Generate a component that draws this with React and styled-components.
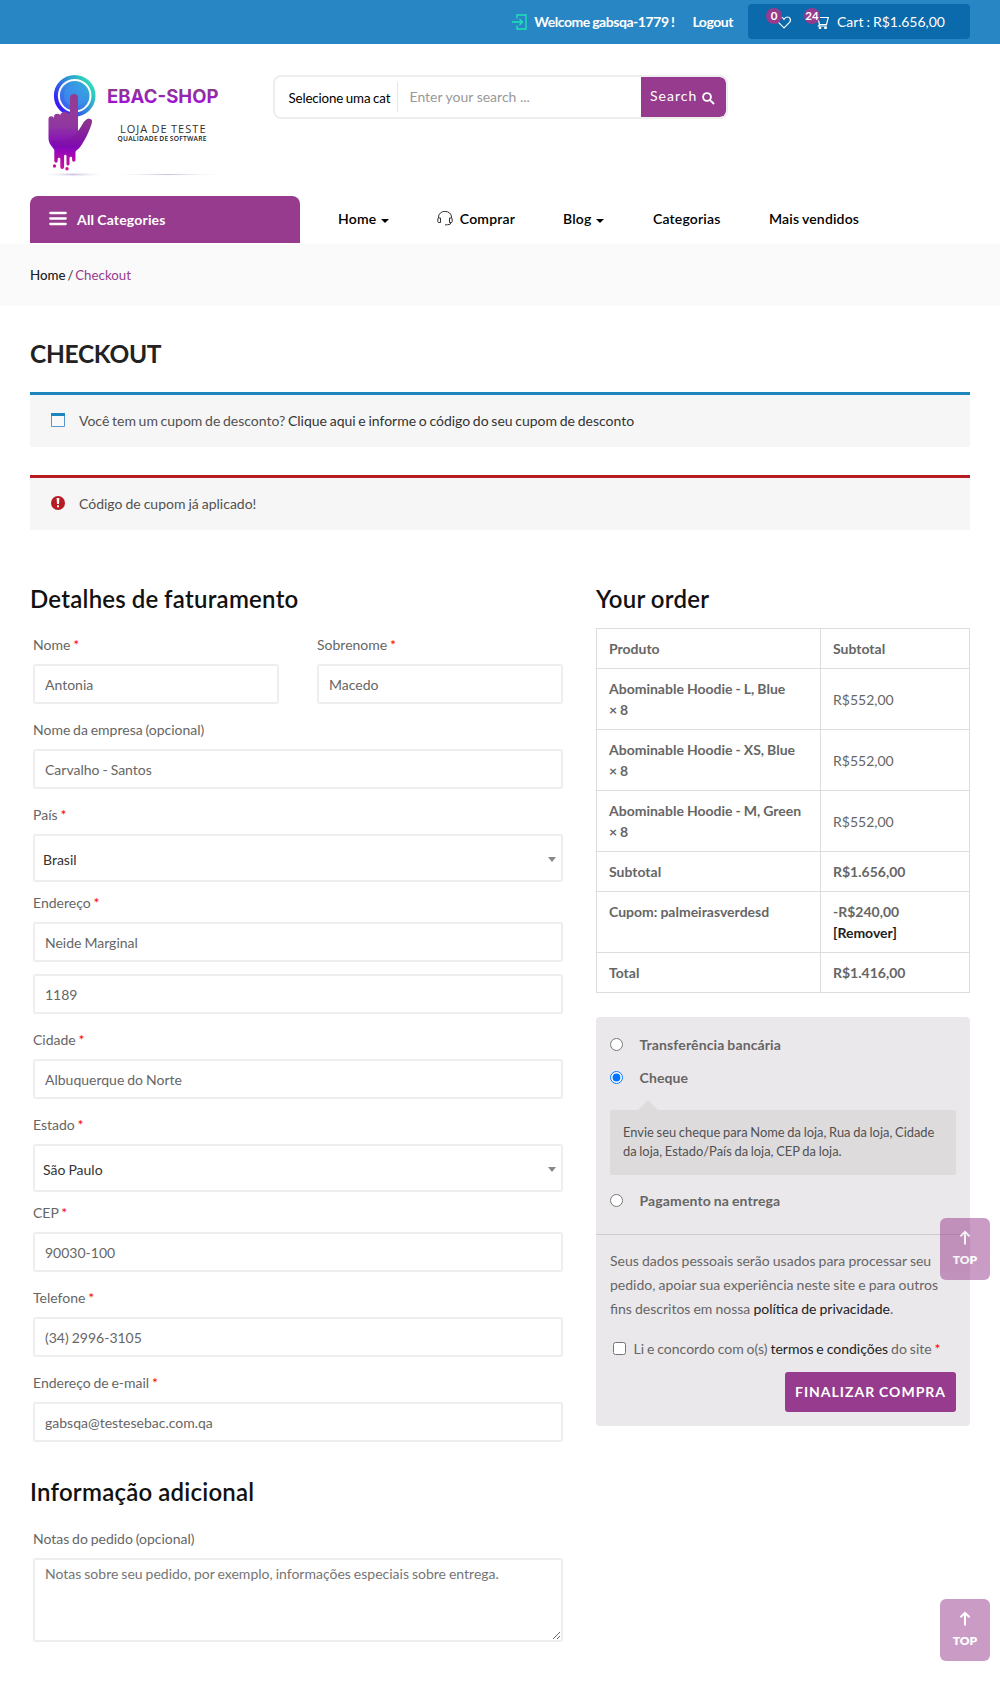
import React from "react";
import styled, { createGlobalStyle, css } from "styled-components";

const PURPLE = "#963b8d";

const Global = createGlobalStyle`
  * { box-sizing: border-box; }
  body {
    margin: 0; background: #fff; color: #666;
    font-family: Lato, "Liberation Sans", sans-serif;
    font-size: 14px; line-height: 21px; word-spacing: -0.6px;
  }
  a { color: inherit; text-decoration: none; }
  input, textarea, button { font-family: inherit; word-spacing: inherit; }
`;

const Page = styled.div`
  position: relative; width: 1000px; height: 1701px; overflow: hidden;
`;
const Container = styled.div` padding: 0 30px; `;

/* top bar */
const TopBar = styled.div`
  display: flex; justify-content: flex-end; align-items: flex-start;
  height: 44px; padding: 4px 30px 0 0; background: #2986c4; color: #fff;
`;
const TopLink = styled.a`
  display: flex; align-items: center; height: 35px;
  margin-right: ${(p) => p.$gap}px;
  font-size: 14px; font-weight: 700; letter-spacing: -0.45px; white-space: nowrap;
  svg { margin-right: 7px; }
`;
const CartBox = styled.div`
  display: flex; align-items: center; width: 222px; height: 35px;
  padding-left: 29px; border-radius: 4px; background: #0a6aac;
`;
const IconSlot = styled.span`
  position: relative; display: flex; width: ${(p) => p.$w}px; height: 14px; margin-right: ${(p) => p.$gap}px;
`;
const Badge = styled.span`
  position: absolute; left: ${(p) => p.$left}px; top: -7px;
  width: 16px; height: 16px; border-radius: 50%; background: ${PURPLE};
  font-size: 11.5px; line-height: 15px; font-weight: 700; text-align: center;
  display: flex; justify-content: center;
`;
const CartText = styled.span` font-size: 14px; white-space: nowrap; `;

/* header */
const Header = styled.div` display: flex; height: 152px; padding-left: 30px; `;
const Logo = styled.svg` display: block; width: 243px; height: 152px; `;
const SearchBar = styled.div`
  display: flex; align-items: stretch; width: 455px; height: 44px; margin-top: 31px;
  border: 2px solid #eee; border-radius: 8px; overflow: hidden;
`;
const SearchCat = styled.div`
  width: 123px; margin: 5px 0; padding-left: 13.5px; border-right: 1px solid #e5e5e5;
  color: #000; font-size: 13.333px; line-height: 33px; letter-spacing: -0.15px; white-space: nowrap;
`;
const SearchField = styled.div`
  flex: 1; padding-left: 11.5px; color: #999; font-size: 14px; line-height: 40px; word-spacing: 0;
`;
const SearchButton = styled.div`
  display: flex; align-items: center; width: 85px; padding: 0 0 3px 9px; border-radius: 0 6px 6px 0;
  background: ${PURPLE}; color: #fff; font-size: 14px; letter-spacing: 1px;
  svg { margin: 5px 0 0 5px; }
`;

/* navigation */
const Nav = styled.nav` display: flex; height: 48px; padding-left: 30px; `;
const AllCategories = styled.div`
  display: flex; align-items: center; width: 270px; height: 47px; padding-left: 19px;
  border-radius: 8px 8px 0 0; background: ${PURPLE}; color: #fff; font-weight: 700; letter-spacing: 0.18px;
  svg { margin-right: 10px; margin-top: -2px; }
`;
const NavItem = styled.a`
  display: flex; align-items: center; height: 45px; margin-left: ${(p) => p.$left}px;
  color: #000; font-size: 14px; font-weight: 600; letter-spacing: 0.18px; white-space: nowrap;
  svg { margin-right: 7px; }
`;
const Caret = styled.i`
  margin: 4px 0 0 5px; border: 4px solid transparent; border-top-color: #000; border-bottom: 0;
`;

const Breadcrumb = styled.div`
  height: 62px; padding: 21px 30px 0; background: #fafafa; color: #333; font-size: 13.3px; word-spacing: -1.6px;
  a { color: #222; font-weight: 500; }
  span { color: ${PURPLE}; }
`;

const PageTitle = styled.h1`
  margin: 0; padding-top: 33px; height: 86px; color: #222;
  font-size: 24.5px; line-height: 30px; font-weight: 700; letter-spacing: -0.3px;
`;

const Notice = styled.div`
  display: flex; align-items: center; height: 55px; margin-bottom: 28px; padding: 0 0 2px 21px;
  border-top: 3px solid ${(p) => p.$color}; background: #f6f6f6; color: #515151;
  word-spacing: ${(p) => p.$ws}px;
  a { color: #333; }
  svg { margin-right: 14px; }
`;

const Columns = styled.div` display: flex; padding-top: 23px; `;
const Billing = styled.form` width: 533px; margin-right: 33px; `;
const Order = styled.div` width: 374px; `;
const Heading = styled.h3`
  margin: ${(p) => p.$mt || 0}px 0 ${(p) => p.$mb}px; color: #111;
  font-size: 24px; line-height: 36px; font-weight: 600; letter-spacing: 0.25px;
`;

const Fields = styled.div` padding-left: 3px; `;
const Row = styled.div` display: flex; gap: 38px; `;
const Field = styled.label` display: block; flex: 1; `;
const Label = styled.span`
  display: block; height: 33px; line-height: 28px; color: #666; word-spacing: -0.8px;
  i { color: red; font-style: normal; }
`;
const boxed = css`
  display: block; width: 100%; border: 2px solid #eee; border-radius: 3px; background: #fff;
  color: #666; font-size: 14px;
`;
const Input = styled.input` ${boxed} height: 40px; padding: 1px 10px 0; margin-bottom: 12px; outline: 0; `;
const Select = styled.div`
  ${boxed} display: flex; align-items: center; justify-content: space-between;
  height: 48px; padding: 2px 5px 0 8px; margin-bottom: 7px; color: #333;
`;
const SelectArrow = styled.i`
  border: 4px solid transparent; border-top: 5px solid #888; border-bottom: 0;
`;
const Notes = styled.textarea`
  ${boxed} height: 84px; padding: 3px 10px; line-height: 21px; outline: 0;
  &::placeholder { color: #757575; }
`;

/* order table */
const Table = styled.div`
  display: grid; grid-template-columns: 224px 149px; width: 374px;
  border: 1px solid #ddd; border-bottom: 0; word-spacing: -0.4px;
`;
const Cell = styled.div`
  display: flex; flex-direction: column; justify-content: ${(p) => (p.$middle ? "center" : "flex-start")};
  min-height: ${(p) => (p.$tall ? 61 : 40)}px; padding: 9px 12px;
  border-bottom: 1px solid #ddd; color: #666; font-weight: ${(p) => (p.$light ? 400 : 700)};
  &:nth-child(odd) { border-right: 1px solid #ddd; }
  a { color: #222; }
`;

/* payment */
const Payment = styled.div`
  margin-top: 24px; height: 409px; border-radius: 4px; background: #ebe8eb;
`;
const Methods = styled.div`
  display: flex; flex-direction: column; height: 218px; padding: 16px 14px 0;
  border-bottom: 1px solid #cfcbd1;
`;
const Method = styled.label`
  display: flex; align-items: center; height: 23px; margin-bottom: 10px; color: #666;
  font-weight: 700; letter-spacing: 0.12px;
  input { width: 13px; height: 13px; margin: 0 16.5px 0 0; }
`;
const MethodNote = styled.div`
  position: relative; height: 65px; margin: 11px 0 14px; padding: 13px; border-radius: 2px;
  background: #dedbdd; color: #515151; font-size: 12.9px; line-height: 19px; white-space: nowrap;
  &::before {
    content: ""; position: absolute; left: 28px; top: -10px;
    border: 10px solid transparent; border-top: 0; border-bottom-color: #dedbdd;
  }
`;
const Terms = styled.div`
  padding: 14px 14px 0; word-spacing: -0.5px;
  p { margin: 0; line-height: 24px; white-space: nowrap; }
  a { color: #222; }
`;
const Agree = styled.label`
  display: flex; align-items: center; height: 24px; margin: 15px 0 12px; white-space: pre; word-spacing: -0.65px;
  input { width: 13px; height: 13px; margin: 1px 7.5px 0 3px; }
  i { color: red; font-style: normal; }
`;
const PlaceOrder = styled.button`
  display: block; width: 171px; height: 40px; margin-left: auto; padding: 0 0 1px; border: 0; border-radius: 3px;
  background: ${PURPLE}; color: #fff; font-size: 14px; font-weight: 700; letter-spacing: 1px; white-space: nowrap;
`;

const TopButton = styled.a`
  position: absolute; left: 940px; top: ${(p) => p.$top}px; width: 50px; height: 62px;
  display: flex; flex-direction: column; align-items: center; padding-top: 12px;
  border-radius: 6px; background: ${PURPLE}; opacity: 0.5;
  color: #fff; font-size: 12px; line-height: 16px; font-weight: 800;
  svg { margin-bottom: 7px; }
`;

const LogoArt = () => (
  <Logo viewBox="30 44 243 152">
    <defs>
      <linearGradient id="ring" x1="0" y1="0.9" x2="1" y2="0.2">
        <stop offset="0" stopColor="#3a00ff" /><stop offset="0.5" stopColor="#2f7fe0" /><stop offset="1" stopColor="#2fe3b4" />
      </linearGradient>
      <linearGradient id="disc" x1="0" y1="1" x2="1" y2="0">
        <stop offset="0" stopColor="#3c55f5" /><stop offset="1" stopColor="#33b9d2" />
      </linearGradient>
      <linearGradient id="hand" x1="0" y1="0" x2="0" y2="1">
        <stop offset="0" stopColor="#943b8e" /><stop offset="0.42" stopColor="#9138a0" />
        <stop offset="0.7" stopColor="#8406bf" /><stop offset="1" stopColor="#d0109c" />
      </linearGradient>
      <linearGradient id="thumb" x1="0" y1="0" x2="0" y2="1">
        <stop offset="0" stopColor="#843080" /><stop offset="1" stopColor="#7c0aa8" />
      </linearGradient>
      <linearGradient id="name" x1="0" y1="0" x2="0" y2="1">
        <stop offset="0.2" stopColor="#8c3a8c" /><stop offset="0.8" stopColor="#a010d8" />
      </linearGradient>
      <radialGradient id="shade"><stop offset="0" stopColor="#c9c2e0" /><stop offset="1" stopColor="#fff" stopOpacity="0" /></radialGradient>
    </defs>
    <circle cx="74.700" cy="95.700" r="18.800" fill="none" stroke="url(#ring)" strokeWidth="4" />
    <circle cx="74.700" cy="95.700" r="14.800" fill="url(#disc)" />
    <circle cx="74.700" cy="95.700" r="10.800" fill="#3f9cf0" opacity="0.45" />
    <path d="M70 98a4 4 0 0 1 8 0V131C81 128 83 122 85.500 120.500C88 117.500 92.500 119 92 122C90 130 84 142 80 147C78 150 76 150 75.500 152V160a1.700 1.700 0 0 1-3.400 0V158a1.300 1.300 0 0 0-2.600 0V164a1.500 1.500 0 0 1-3 0V156a1.200 1.200 0 0 0-2.400 0V167a1.900 1.900 0 0 1-3.800 0V159a1.300 1.300 0 0 0-2.600 0V161a1.700 1.700 0 0 1-3.400 0V150C52 146 48.500 144 48.500 138V119a2.600 2.600 0 0 1 5.500 0V117a3 3 0 0 1 6.500 0a3.200 3.200 0 0 1 2-4.500a3.300 3.300 0 0 1 5.500 1.500a3 3 0 0 1 2-1z" fill="url(#hand)" />
    <path d="M78 131C81 128 83 122 85.500 120.500C88 117.500 92.500 119 92 122C90 130 84 142 80 147C72 149 58 150 50 141C64 141 74 138 78 131z" fill="url(#thumb)" opacity="0.6" />
    <circle cx="54.500" cy="166" r="1.700" fill="#d0109c" />
    <circle cx="67" cy="168.800" r="1.700" fill="#d0109c" />
    <ellipse cx="73" cy="174.500" rx="33" ry="2.500" fill="url(#shade)" />
    <ellipse cx="168" cy="174.500" rx="60" ry="1.300" fill="url(#shade)" />
    <text x="107" y="103.200" fontFamily="Inter, sans-serif" fontSize="18.500" fontWeight="700" textLength="111.500" fill="url(#name)">EBAC-SHOP</text>
    <text x="120" y="132.700" fontFamily='"Open Sans", sans-serif' fontSize="11" textLength="85.500" fill="#333">LOJA DE TESTE</text>
    <text x="117.500" y="140.800" fontFamily='"Open Sans", sans-serif' fontSize="6.700" fontWeight="600" textLength="89" fill="#222">QUALIDADE DE SOFTWARE</text>
  </Logo>
);

const TextField = ({ label, req, value }) => (
  <Field>
    <Label>{label}{req && <> <i>*</i></>}</Label>
    <Input defaultValue={value} />
  </Field>
);
const SelectField = ({ label, value }) => (
  <Field as="div">
    <Label>{label} <i>*</i></Label>
    <Select>{value}<SelectArrow /></Select>
  </Field>
);

const items = ["L, Blue", "XS, Blue", "M, Green"];

const BackToTop = ({ top }) => (
  <TopButton $top={top}>
    <svg width="12" height="15" viewBox="0 0 12 15" fill="none" stroke="#fff" strokeWidth="2">
      <path d="M6 14.500V2M1.500 6.300L6 1.800L10.500 6.300" />
    </svg>
    TOP
  </TopButton>
);

export default function App() {
  return (
    <Page>
      <Global />
      <TopBar>
        <TopLink $gap={18}>
          <svg width="15" height="16" viewBox="0 0 15 16" fill="none" stroke="#1fe5b5" strokeWidth="1.300">
            <path d="M5 4.500V1h9v14H5v-3.500M0 8h10M7.500 5L10.500 8L7.500 11" />
          </svg>
          Welcome gabsqa-1779 !
        </TopLink>
        <TopLink $gap={15}>Logout</TopLink>
        <CartBox>
          <IconSlot $w={14} $gap={24}>
            <svg width="14" height="14" viewBox="0 0 14 14" fill="none" stroke="#fff" strokeWidth="1.200">
              <path d="M7 12.800L1.500 7.300C-.5 5 1 2 3.500 2C5.300 2 6.500 3.300 7 4.300C7.500 3.300 8.700 2 10.500 2C13 2 14.500 5 12.500 7.300Z" />
            </svg>
            <Badge $left={-11}>0</Badge>
          </IconSlot>
          <IconSlot $w={14} $gap={8}>
            <svg width="14" height="14" viewBox="0 0 14 14" fill="none" stroke="#fff" strokeWidth="1.200">
              <path d="M0 1.500H2.500L4.500 9.500H11.500L13.300 2.500H5M4.500 9.500L3.500 11H12" />
              <circle cx="5" cy="12.800" r=".8" fill="#fff" /><circle cx="10.500" cy="12.800" r=".8" fill="#fff" />
            </svg>
            <Badge $left={-11}>24</Badge>
          </IconSlot>
          <CartText>Cart : R$1.656,00</CartText>
        </CartBox>
      </TopBar>

      <Header>
        <LogoArt />
        <SearchBar>
          <SearchCat>Selecione uma cat</SearchCat>
          <SearchField>Enter your search ...</SearchField>
          <SearchButton>
            Search
            <svg width="13" height="13" viewBox="0 0 13 13" fill="none" stroke="#fff" strokeWidth="1.900">
              <circle cx="5" cy="5" r="3.900" /><path d="M7.800 7.800L12 12" />
            </svg>
          </SearchButton>
        </SearchBar>
      </Header>

      <Nav>
        <AllCategories>
          <svg width="18" height="15" viewBox="0 0 18 15" stroke="#fff" strokeWidth="2.300" strokeLinecap="round">
            <path d="M1.300 2H16.700M1.300 7.500H16.700M1.300 13H16.700" />
          </svg>
          All Categories
        </AllCategories>
        <NavItem $left={38}>Home<Caret /></NavItem>
        <NavItem $left={47.5}>
          <svg width="16" height="15" viewBox="0 0 16 15" fill="none" stroke="#333" strokeWidth="1">
            <path d="M1.500 7V6A6.300 5.500 0 0 1 14.500 6V7M3.500 7H1.500Q.8 7 .8 8V10.500Q.8 11.500 1.500 11.500H3.500ZM12.500 7H14.500Q15.200 7 15.200 8V10.500Q15.200 11.500 14.500 11.500H12.500ZM14 11.500Q14 13.800 10.500 13.800H8" />
          </svg>
          Comprar
        </NavItem>
        <NavItem $left={48}>Blog<Caret /></NavItem>
        <NavItem $left={48.5}>Categorias</NavItem>
        <NavItem $left={48.5}>Mais vendidos</NavItem>
      </Nav>

      <Breadcrumb><a>Home</a> / <span>Checkout</span></Breadcrumb>

      <Container>
        <PageTitle>CHECKOUT</PageTitle>
        <Notice $color="#1e85be" $ws={-0.9}>
          <svg width="14" height="14" viewBox="0 0 14 14"><path d="M.5 .5h13v13H.5z" fill="#fff" fillOpacity=".4" stroke="#5b97cc" /><path d="M0 0h14v3H0z" fill="#1e85be" /></svg>
          <span>Você tem um cupom de desconto? <a>Clique aqui e informe o código do seu cupom de desconto</a></span>
        </Notice>
        <Notice $color="#b81c23" $ws={-0.6}>
          <svg width="14" height="14" viewBox="0 0 14 14"><circle cx="7" cy="7" r="7" fill="#b81c23" /><path d="M5.600 2h2.800l-.4 6H6zM6 9.300h2v2H6z" fill="#fff" /></svg>
          <span>Código de cupom já aplicado!</span>
        </Notice>

        <Columns>
          <Billing>
            <Heading $mb={14}>Detalhes de faturamento</Heading>
            <Fields>
              <Row>
                <TextField label="Nome" req value="Antonia" />
                <TextField label="Sobrenome" req value="Macedo" />
              </Row>
              <TextField label="Nome da empresa (opcional)" value="Carvalho - Santos" />
              <SelectField label="País" value="Brasil" />
              <TextField label="Endereço" req value="Neide Marginal" />
              <Input defaultValue="1189" />
              <TextField label="Cidade" req value="Albuquerque do Norte" />
              <SelectField label="Estado" value="São Paulo" />
              <TextField label="CEP" req value="90030-100" />
              <TextField label="Telefone" req value="(34) 2996-3105" />
              <TextField label="Endereço de e-mail" req value="gabsqa@testesebac.com.qa" />
            </Fields>
            <Heading $mt={32} $mb={15}>Informação adicional</Heading>
            <Fields>
              <Field>
                <Label>Notas do pedido (opcional)</Label>
                <Notes placeholder="Notas sobre seu pedido, por exemplo, informações especiais sobre entrega." />
              </Field>
            </Fields>
          </Billing>

          <Order>
            <Heading $mb={11}>Your order</Heading>
            <Table>
              <Cell>Produto</Cell><Cell>Subtotal</Cell>
              {items.map((v) => (
                <React.Fragment key={v}>
                  <Cell $tall><span>Abominable Hoodie - {v}</span><span>× 8</span></Cell>
                  <Cell $tall $middle $light>R$552,00</Cell>
                </React.Fragment>
              ))}
              <Cell>Subtotal</Cell><Cell>R$1.656,00</Cell>
              <Cell $tall>Cupom: palmeirasverdesd</Cell>
              <Cell $tall><span>-R$240,00</span><a>[Remover]</a></Cell>
              <Cell>Total</Cell><Cell>R$1.416,00</Cell>
            </Table>

            <Payment>
              <Methods>
                <Method><input type="radio" name="pay" />Transferência bancária</Method>
                <Method><input type="radio" name="pay" defaultChecked />Cheque</Method>
                <MethodNote>
                  Envie seu cheque para Nome da loja, Rua da loja, Cidade<br />
                  da loja, Estado/País da loja, CEP da loja.
                </MethodNote>
                <Method><input type="radio" name="pay" />Pagamento na entrega</Method>
              </Methods>
              <Terms>
                <p>
                  Seus dados pessoais serão usados para processar seu<br />
                  pedido, apoiar sua experiência neste site e para outros<br />
                  fins descritos em nossa <a>política de privacidade</a>.
                </p>
                <Agree>
                  <input type="checkbox" />
                  <span>Li e concordo com o(s) <a>termos e condições</a> do site <i>*</i></span>
                </Agree>
                <PlaceOrder type="button">FINALIZAR COMPRA</PlaceOrder>
              </Terms>
            </Payment>
          </Order>
        </Columns>
      </Container>

      <BackToTop top={1218} />
      <BackToTop top={1599} />
    </Page>
  );
}
